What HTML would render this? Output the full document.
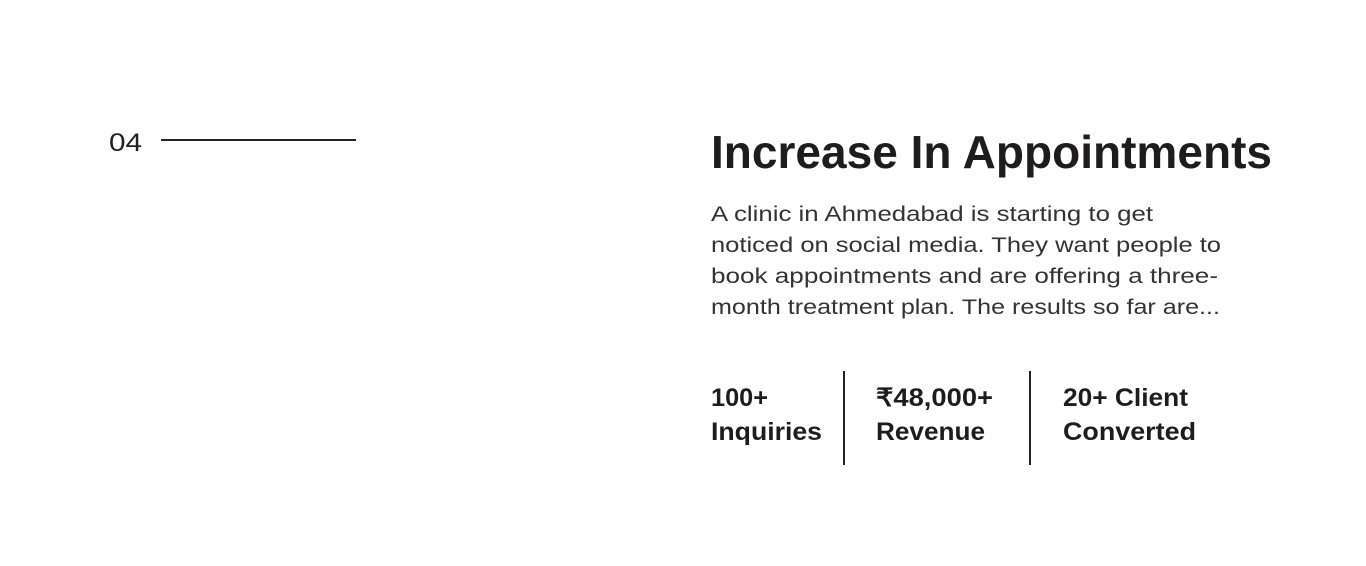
<!DOCTYPE html>
<html><head><meta charset="utf-8"><style>
html,body{margin:0;padding:0;background:#fff;width:1366px;height:566px;overflow:hidden}
svg{display:block}
text{font-family:"Liberation Sans",sans-serif}
</style></head><body>
<svg width="1366" height="566" viewBox="0 0 1366 566" xmlns="http://www.w3.org/2000/svg">
<text x="109" y="151" font-size="25" fill="#222" textLength="33" lengthAdjust="spacingAndGlyphs">04</text>
<rect x="161" y="139" width="195" height="2" fill="#222"/>
<text x="711" y="168" font-size="46" font-weight="bold" fill="#1e1c1c" textLength="561" lengthAdjust="spacingAndGlyphs">Increase In Appointments</text>
<g font-size="21" fill="#333">
<text x="711" y="221" textLength="442" lengthAdjust="spacingAndGlyphs">A clinic in Ahmedabad is starting to get</text>
<text x="711" y="252" textLength="510" lengthAdjust="spacingAndGlyphs">noticed on social media. They want people to</text>
<text x="711" y="283" textLength="507" lengthAdjust="spacingAndGlyphs">book appointments and are offering a three-</text>
<text x="711" y="314" textLength="509" lengthAdjust="spacingAndGlyphs">month treatment plan. The results so far are...</text>
</g>
<g font-size="25" font-weight="bold" fill="#1e1c1c">
<text x="711" y="406" textLength="57" lengthAdjust="spacingAndGlyphs">100+</text>
<text x="711" y="440" textLength="111" lengthAdjust="spacingAndGlyphs">Inquiries</text>
<text x="876" y="406" textLength="117" lengthAdjust="spacingAndGlyphs">₹48,000+</text>
<text x="876" y="440" textLength="109" lengthAdjust="spacingAndGlyphs">Revenue</text>
<text x="1063" y="406" textLength="125" lengthAdjust="spacingAndGlyphs">20+ Client</text>
<text x="1063" y="440" textLength="133" lengthAdjust="spacingAndGlyphs">Converted</text>
</g>
<rect x="843" y="371" width="2" height="94" fill="#222"/>
<rect x="1029" y="371" width="2" height="94" fill="#222"/>
</svg>
</body></html>
